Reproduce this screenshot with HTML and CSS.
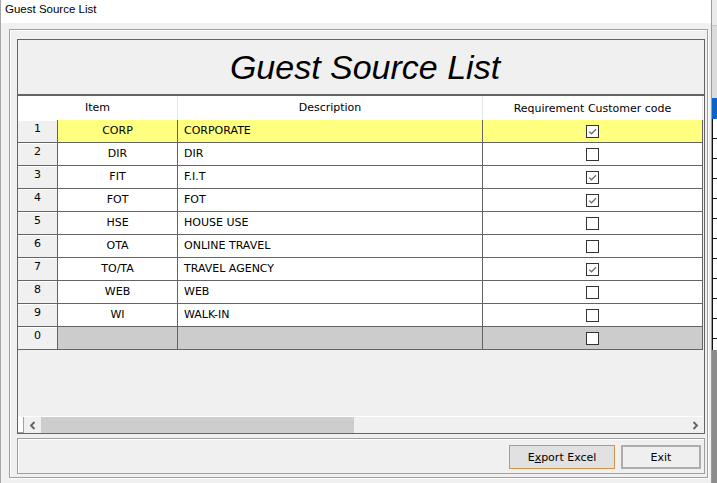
FILE: index.html
```html
<!DOCTYPE html>
<html>
<head>
<meta charset="utf-8">
<link rel="stylesheet" href="styles.css">
</head>
<body>
<div class="window">
  <div class="titlebar"><span class="titletext">Guest Source List</span></div>
  <div class="client">
    <div class="groupbox">
      <div class="grid">
        <div class="grid-title">Guest Source List</div>
        <div class="row head">
          <div class="c itemhead">Item</div>
          <div class="c desc center">Description</div>
          <div class="c req">Requirement Customer code</div>
        </div>
        <div class="row sel">
          <div class="c rh">1</div><div class="c item">CORP</div><div class="c desc">CORPORATE</div>
          <div class="c req"><span class="cb"><svg viewBox="0 0 11 11" width="11" height="11"><path d="M2.2 5.6 L4.5 7.8 L9 3.3" fill="none" stroke="#6e6e6e" stroke-width="1.3"/></svg></span></div>
        </div>
        <div class="row">
          <div class="c rh">2</div><div class="c item">DIR</div><div class="c desc">DIR</div>
          <div class="c req"><span class="cb"></span></div>
        </div>
        <div class="row">
          <div class="c rh">3</div><div class="c item">FIT</div><div class="c desc">F.I.T</div>
          <div class="c req"><span class="cb"><svg viewBox="0 0 11 11" width="11" height="11"><path d="M2.2 5.6 L4.5 7.8 L9 3.3" fill="none" stroke="#6e6e6e" stroke-width="1.3"/></svg></span></div>
        </div>
        <div class="row">
          <div class="c rh">4</div><div class="c item">FOT</div><div class="c desc">FOT</div>
          <div class="c req"><span class="cb"><svg viewBox="0 0 11 11" width="11" height="11"><path d="M2.2 5.6 L4.5 7.8 L9 3.3" fill="none" stroke="#6e6e6e" stroke-width="1.3"/></svg></span></div>
        </div>
        <div class="row">
          <div class="c rh">5</div><div class="c item">HSE</div><div class="c desc">HOUSE USE</div>
          <div class="c req"><span class="cb"></span></div>
        </div>
        <div class="row">
          <div class="c rh">6</div><div class="c item">OTA</div><div class="c desc">ONLINE TRAVEL</div>
          <div class="c req"><span class="cb"></span></div>
        </div>
        <div class="row">
          <div class="c rh">7</div><div class="c item">TO/TA</div><div class="c desc">TRAVEL AGENCY</div>
          <div class="c req"><span class="cb"><svg viewBox="0 0 11 11" width="11" height="11"><path d="M2.2 5.6 L4.5 7.8 L9 3.3" fill="none" stroke="#6e6e6e" stroke-width="1.3"/></svg></span></div>
        </div>
        <div class="row">
          <div class="c rh">8</div><div class="c item">WEB</div><div class="c desc">WEB</div>
          <div class="c req"><span class="cb"></span></div>
        </div>
        <div class="row">
          <div class="c rh">9</div><div class="c item">WI</div><div class="c desc">WALK-IN</div>
          <div class="c req"><span class="cb"></span></div>
        </div>
        <div class="row newrow">
          <div class="c rh">0</div><div class="c item"></div><div class="c desc"></div>
          <div class="c req"><span class="cb"></span></div>
        </div>
        <div class="empty"></div>
        <div class="hscroll">
          <div class="nub"></div>
          <div class="arrow"><svg width="8" height="9" viewBox="0 0 8 9"><path d="M5.5 1 L2 4.5 L5.5 8" fill="none" stroke="#606060" stroke-width="1.8"/></svg></div>
          <div class="thumb"></div>
          <div class="track"></div>
          <div class="arrow"><svg width="8" height="9" viewBox="0 0 8 9"><path d="M2.5 1 L6 4.5 L2.5 8" fill="none" stroke="#606060" stroke-width="1.8"/></svg></div>
        </div>
      </div>
      <div class="panel">
        <button class="btn export">E<u>x</u>port Excel</button>
        <button class="btn exit">Exit</button>
      </div>
    </div>
  </div>
</div>
<div class="side">
  <div class="s1"></div>
  <div class="s2"></div>
  <div class="s3"></div>
  <div class="s4"></div>
  <div class="s5"></div>
</div>
</body>
</html>
```

FILE: styles.css
```css
html, body {
  margin: 0;
  padding: 0;
}
body {
  width: 717px;
  height: 483px;
  overflow: hidden;
  display: flex;
  background: #f0f0f0;
  font-family: "DejaVu Sans", sans-serif;
  font-size: 11px;
  color: #000;
}
.window {
  width: 712px;
  height: 483px;
  box-sizing: border-box;
  border-left: 1px solid #a8a8a8;
  border-right: 1px solid #9a9a9a;
  background: #f0f0f0;
  display: flex;
  flex-direction: column;
}
.titlebar {
  height: 23px;
  background: #fff;
  flex: none;
  padding-left: 4px;
}
.titletext {
  font-family: "Liberation Sans", sans-serif;
  font-size: 11.5px;
  line-height: 18px;
  white-space: nowrap;
}
.client {
  padding: 6px 3px 0 8px;
}
.groupbox {
  width: 699px;
  height: 449px;
  box-sizing: border-box;
  border: 1px solid #a0a0a0;
  box-shadow: inset 1px 1px 0 #fff, 1px 1px 0 #fff;
  padding: 9px 2px 3px 7px;
  display: flex;
  flex-direction: column;
}
.grid {
  width: 688px;
  height: 395px;
  box-sizing: border-box;
  border: 1px solid #646464;
  background: #f0f0f0;
  display: flex;
  flex-direction: column;
}
.grid-title {
  height: 54px;
  border-bottom: 2px solid #646464;
  text-align: center;
  font-family: "Liberation Sans", sans-serif;
  font-style: italic;
  font-size: 34px;
  line-height: 54px;
  padding-left: 8px;
  flex: none;
}
.row {
  display: grid;
  grid-template-columns: 40px 120px 305px 220px;
  height: 23px;
  flex: none;
}
.row.head {
  height: 24px;
  background: #fff;
}
.c {
  box-sizing: border-box;
  border-right: 1px solid #646464;
  border-bottom: 1px solid #646464;
  background: #fff;
  line-height: 21px;
  white-space: nowrap;
  overflow: hidden;
}
.head .c {
  border-bottom: none;
  border-right: 1px solid #e4e4e4;
  line-height: 23px;
  text-align: center;
  color: #000;
}
.head .itemhead {
  grid-column: span 2;
}
.rh {
  background: #f0f0f0;
  text-align: center;
  line-height: 17px;
  box-shadow: inset 0 1px 0 #fff;
}
.item {
  text-align: center;
}
.desc {
  padding-left: 6px;
}
.desc.center {
  padding-left: 0;
}
.req {
  text-align: center;
  display: flex;
  justify-content: center;
  align-items: center;
}
.sel .item, .sel .desc, .sel .req {
  background: #ffff80;
}
.newrow .item, .newrow .desc, .newrow .req {
  background: #cccccc;
}
.cb {
  width: 13px;
  height: 13px;
  box-sizing: border-box;
  border: 1px solid #333;
  background: #fff;
  display: flex;
  align-items: center;
  justify-content: center;
}
.cb svg {
  display: block;
}
.empty {
  flex: 1;
}
.hscroll {
  height: 17px;
  flex: none;
  box-sizing: border-box;
  border-top: 1px solid #fff;
  display: flex;
  width: 685px;
}
.nub {
  width: 6px;
  box-sizing: border-box;
  background: #fff;
  border-right: 1px solid #a0a0a0;
  border-bottom: 1px solid #a0a0a0;
}
.arrow {
  width: 17px;
  display: flex;
  align-items: center;
  justify-content: center;
  background: #f0f0f0;
}
.thumb {
  width: 313px;
  background: #cdcdcd;
}
.track {
  flex: 1;
  background: #f0f0f0;
}
.panel {
  margin-top: 4px;
  width: 688px;
  height: 36px;
  box-sizing: border-box;
  border: 1px solid #a0a0a0;
  box-shadow: inset 1px 1px 0 #fff;
  display: flex;
  justify-content: flex-end;
  align-items: flex-start;
  padding: 6px 3px 0 0;
  gap: 6px;
}
.btn {
  height: 24px;
  box-sizing: border-box;
  font-family: "DejaVu Sans", sans-serif;
  font-size: 11px;
  color: #000;
  padding: 0;
  margin: 0;
}
.export {
  width: 106px;
  border: 1px solid #d3914f;
  background: #e1e1e1;
}
.exit {
  width: 80px;
  border: 2px solid #adadad;
  background: #efefef;
}
.side {
  width: 5px;
  height: 483px;
  display: flex;
  flex-direction: column;
}
.s1 { height: 25px; background: #ebebeb; }
.s2 { height: 72px; background: #dcdcdc; border-top: 1px solid #c8c8c8; }
.s3 { height: 21px; background: #0a64c8; }
.s4 { height: 231px; background: #fff; border-left: 1px solid #111; background-image: repeating-linear-gradient(to bottom, #fff 0, #fff 19px, #111 19px, #111 20px); }
.s5 { flex: 1; background: #8c8c8c; }
```
